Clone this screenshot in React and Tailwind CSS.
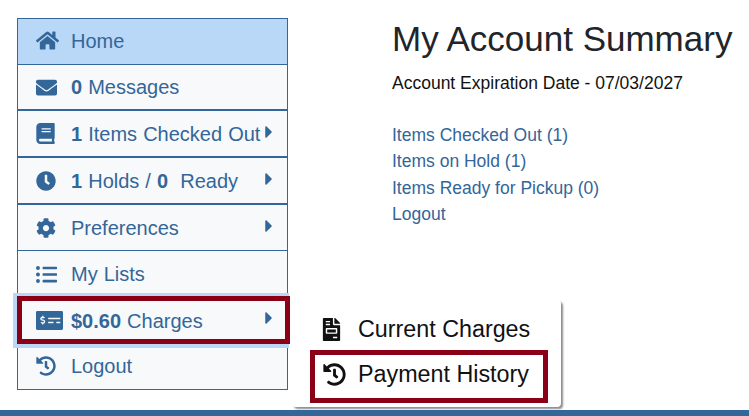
import React from "react";
import {
  FaHome,
  FaEnvelope,
  FaBook,
  FaClock,
  FaCog,
  FaListUl,
  FaMoneyCheckAlt,
  FaHistory,
  FaFileInvoice,
  FaCaretRight,
} from "react-icons/fa";

// Sidebar rows, heights and divider weights follow the reference
const navItems = [
  { icon: FaHome, size: 23, label: <>Home</>, rowClass: "h-[46px] pb-[2px] bg-[#b9d7f7] border-b border-[#336699]" },
  { icon: FaEnvelope, size: 21, label: <><b>0</b> Messages</>, rowClass: "h-[46px] border-b-2 border-[#336699]" },
  { icon: FaBook, size: 21, iconClass: "-ml-[1px]", label: <><b>1</b> Items Checked Out</>, caret: true, rowClass: "h-[47px] border-b-2 border-[#336699]" },
  { icon: FaClock, size: 20, label: <><b>1</b> Holds / <b>0</b>&nbsp; Ready</>, caret: true, rowClass: "h-[47px] border-b-2 border-[#336699]" },
  { icon: FaCog, size: 20, label: <>Preferences</>, caret: true, rowClass: "h-[46px] border-b border-[#336699]" },
  { icon: FaListUl, size: 21, label: <>My Lists</>, rowClass: "h-[46px]" },
  { icon: FaMoneyCheckAlt, size: 27, label: <><b>$0.60</b> Charges</>, caret: true, rowClass: "h-[47px]" },
  { icon: FaHistory, size: 20, label: <>Logout</>, rowClass: "h-[45px] pb-[2px]" },
];

function NavRow({ item }) {
  const Icon = item.icon;
  return (
    <div className={`relative flex items-center pl-[18px] ${item.rowClass}`}>
      <span className="flex w-[35px] shrink-0 items-center">
        <Icon size={item.size} className={item.iconClass} />
      </span>
      <span className="whitespace-nowrap">{item.label}</span>
      {item.caret && (
        <FaCaretRight size={20} className="absolute right-[8px] top-[11px]" />
      )}
    </div>
  );
}

export default function App() {
  return (
    <div className="relative h-[416px] w-[749px] overflow-hidden bg-white font-['Liberation_Sans',Arial,sans-serif]">
      <div className="flex items-start gap-[104px] pl-[17px] pt-[18px]">
        <nav className="relative w-[271px] shrink-0 border border-[#336699] bg-[#f8f9fa] text-[20px] [word-spacing:0.5px] text-[#336699]">
          {navItems.map((item, i) => (
            <NavRow key={i} item={item} />
          ))}
          {/* focus ring and red callout around the Charges row */}
          <div className="absolute left-[-5px] top-[274px] h-[55px] w-[276px] border-4 border-[#b9d7f7]" />
          <div className="absolute left-[-1px] top-[277px] h-[48px] w-[273px] border-[5px] border-[#8b0016]" />
        </nav>

        <main className="pt-[1px]">
          <h1 className="whitespace-nowrap text-[35px] leading-[40px] text-[#212529]">My Account Summary</h1>
          <p className="mt-[12px] whitespace-nowrap text-[17.5px] leading-[24px] text-[#111]">
            Account Expiration Date - 07/03/2027
          </p>
          <div className="mt-[27px] flex flex-col whitespace-nowrap text-[17.5px] leading-[26.4px] text-[#336699]">
            <span>Items Checked Out (1)</span>
            <span>Items on Hold (1)</span>
            <span>Items Ready for Pickup (0)</span>
            <span>Logout</span>
          </div>
        </main>
      </div>

      {/* Charges submenu */}
      <div className="absolute left-[292px] top-[300px] h-[107px] w-[269px] rounded-[4px] bg-white text-[23.3px] text-[#111] shadow-[2px_2px_2px_rgba(0,0,0,0.45)]">
        <div className="flex h-[50px] items-center pl-[28px] pt-[8px]">
          <span className="flex w-[38px] shrink-0"><FaFileInvoice size={23} /></span>
          <span>Current Charges</span>
        </div>
        <div className="ml-[18px] flex h-[53px] w-[238px] items-center border-[5px] border-[#8b0016] pb-[5px] pl-[8px]">
          <span className="flex w-[35px] shrink-0"><FaHistory size={23} /></span>
          <span>Payment History</span>
        </div>
      </div>

      <div className="absolute bottom-0 left-0 h-[6px] w-full bg-[#336699]" />
    </div>
  );
}
